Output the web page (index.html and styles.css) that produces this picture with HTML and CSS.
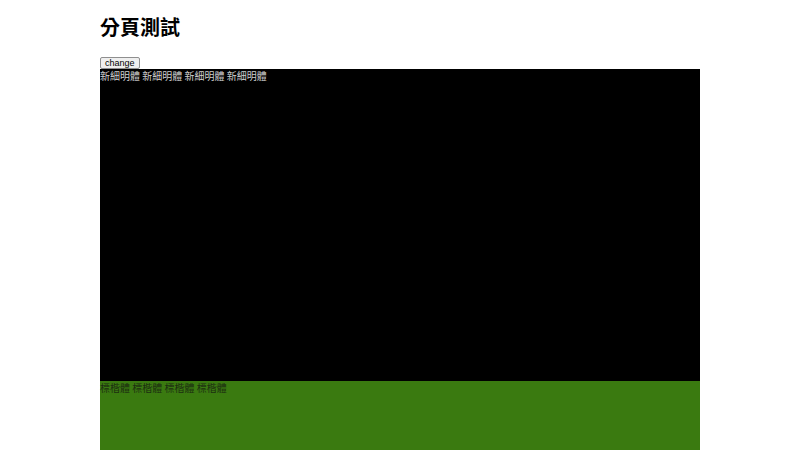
FILE: index.html
```html
<!DOCTYPE html>
<html lang="zh-Hant">
<head>
<meta charset="utf-8">
<title>分頁測試</title>
<link rel="stylesheet" href="styles.css">
</head>
<body>
<div class="wrap">
  <h1 class="title">分頁測試</h1>
  <button class="btn" type="button">change</button>
  <div class="page page-dark">新細明體 新細明體 新細明體 新細明體</div>
  <div class="page page-green">標楷體 標楷體 標楷體 標楷體</div>
</div>
</body>
</html>
```

FILE: styles.css
```css
html, body {
  margin: 0;
  padding: 0;
  background: #ffffff;
}
body {
  font-family: "Liberation Sans", "Noto Sans CJK TC", sans-serif;
}
.wrap {
  width: 600px;
  margin: 0 auto;
}
.title {
  margin: 0;
  padding-top: 16px;
  font-size: 20px;
  line-height: 24px;
  font-weight: bold;
  color: #000;
  font-family: "Liberation Sans", "Noto Sans CJK TC", sans-serif;
}
.btn {
  display: block;
  margin: 17px 0 0 0;
  height: 12px;
  padding: 0 4px;
  font-size: 9px;
  line-height: 10px;
  font-family: "Liberation Sans", sans-serif;
  color: #000;
  background: #efefef;
  border: 1px solid #8f8f8f;
  border-radius: 2px;
}
.page {
  height: 312px;
  font-size: 10px;
  line-height: 14px;
  font-family: "Noto Sans CJK TC", sans-serif;
}
.page-dark {
  background: #000000;
  color: #cfcfcf;
}
.page-green {
  background: #3a7a10;
  color: #1c2e10;
}
```
